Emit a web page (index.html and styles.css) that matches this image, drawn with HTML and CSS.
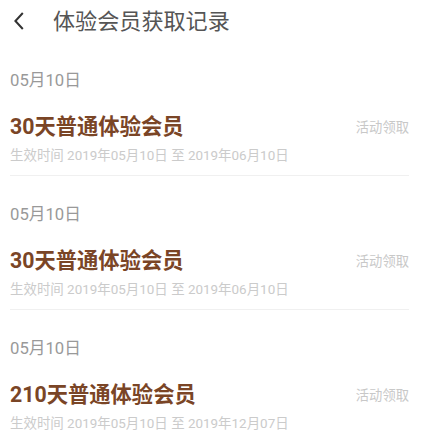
FILE: index.html
```html
<!DOCTYPE html>
<html lang="zh-CN">
<head>
<meta charset="utf-8">
<title>体验会员获取记录</title>
<link rel="stylesheet" href="styles.css">
</head>
<body>
<header class="bar">
  <svg class="back" width="12" height="18" viewBox="0 0 12 18"><path d="M9.8 1 2.4 9l7.4 8" fill="none" stroke="#333" stroke-width="2"/></svg>
  <h1 class="heading">体验会员获取记录</h1>
</header>
<main class="list">
  <section class="record">
    <div class="date">05月10日</div>
    <div class="row"><div class="name">30天普通体验会员</div><div class="source">活动领取</div></div>
    <div class="span">生效时间 2019年05月10日 至 2019年06月10日</div>
  </section>
  <section class="record">
    <div class="date">05月10日</div>
    <div class="row"><div class="name">30天普通体验会员</div><div class="source">活动领取</div></div>
    <div class="span">生效时间 2019年05月10日 至 2019年06月10日</div>
  </section>
  <section class="record">
    <div class="date">05月10日</div>
    <div class="row"><div class="name">210天普通体验会员</div><div class="source">活动领取</div></div>
    <div class="span">生效时间 2019年05月10日 至 2019年12月07日</div>
  </section>
</main>
</body>
</html>
```
FILE: styles.css
```css
* { box-sizing: border-box; }
html, body { margin: 0; padding: 0; height: 448px; overflow: hidden; background: #fff; }
body { font-family: Roboto, "Noto Sans CJK SC", sans-serif; }
.bar { display: flex; align-items: center; height: 42px; padding-left: 13px; }
.back { flex: none; }
.heading { margin: 0 0 0 28px; font-size: 22.1px; line-height: 42px; font-weight: 400; color: #555; }
.list { padding: 0 20px 0 10px; }
.record { height: 134px; padding-top: 25px; border-bottom: 1px solid #f0f0f0; }
.record:last-child { border-bottom: 0; }
.date { font-size: 16.7px; line-height: 28px; color: #999; }
.row { display: flex; justify-content: space-between; align-items: center; margin-top: 16px; height: 32px; }
.name { font-size: 21.3px; font-weight: 700; line-height: 32px; color: #7a4526; }
.source { font-size: 13.3px; color: #c8c8c8; margin-top: -2px; }
.span { margin-top: 3px; font-size: 13.45px; line-height: 20px; color: #cbcbcb; }
```
